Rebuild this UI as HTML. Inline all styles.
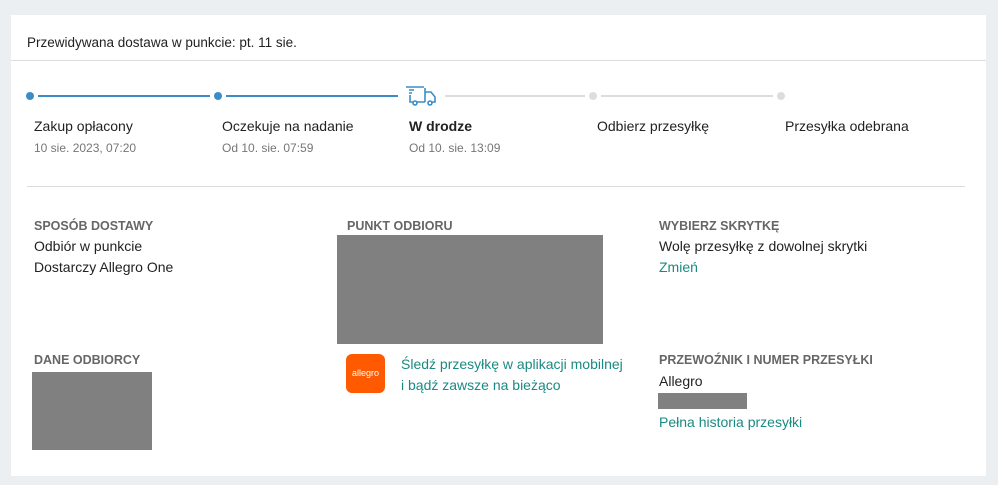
<!DOCTYPE html><html><head><style>
body{margin:0;width:998px;height:485px;background:#eceff2;font-family:"Liberation Sans",sans-serif;position:relative;overflow:hidden}
.card{position:absolute;left:11px;top:15px;width:975px;height:461px;background:#fff}
.a{position:absolute;white-space:nowrap}
.t{font-size:14px;color:#222}
.s{font-size:12px;color:#767676}
.h{font-size:12.5px;font-weight:bold;color:#666}
.g{font-size:14px;color:#1a8a82}
.gray{position:absolute;background:#808080}
.dot{position:absolute;width:8px;height:8px;border-radius:50%}
.ln{position:absolute;height:2px}
</style></head><body>
<div class="card"></div>
<div class="a t" style="left:27px;top:35px;font-size:13.5px">Przewidywana dostawa w punkcie: pt. 11 sie.</div>
<div style="position:absolute;left:11px;top:60px;width:975px;height:1px;background:#ddd"></div>
<div class="dot" style="left:26px;top:92px;background:#3c8dc5"></div>
<div class="ln" style="left:38px;top:95px;width:172px;background:#3c8dc5"></div>
<div class="dot" style="left:214px;top:92px;background:#3c8dc5"></div>
<div class="ln" style="left:226px;top:95px;width:172px;background:#3c8dc5"></div>
<svg style="position:absolute;left:405px;top:85px" width="32" height="22" viewBox="0 0 32 22" fill="none" stroke="#3c8dc5" stroke-width="1.6"><path d="M1 2h18M4 5h5M4 8h3M5 10v7h3M12 17h8M20 3v14M20 7h6l4 5v5h-3"/><circle cx="10" cy="18" r="2"/><circle cx="25" cy="18" r="2"/></svg>
<div class="ln" style="left:445px;top:95px;width:140px;background:#ddd"></div>
<div class="dot" style="left:589px;top:92px;background:#ddd"></div>
<div class="ln" style="left:601px;top:95px;width:172px;background:#ddd"></div>
<div class="dot" style="left:777px;top:92px;background:#ddd"></div>
<div class="a t" style="left:34px;top:118px">Zakup opłacony</div>
<div class="a s" style="left:34px;top:141px">10 sie. 2023, 07:20</div>
<div class="a t" style="left:222px;top:118px">Oczekuje na nadanie</div>
<div class="a s" style="left:222px;top:141px">Od 10. sie. 07:59</div>
<div class="a t" style="left:409px;top:118px;font-weight:bold">W drodze</div>
<div class="a s" style="left:409px;top:141px">Od 10. sie. 13:09</div>
<div class="a t" style="left:597px;top:118px">Odbierz przesyłkę</div>
<div class="a t" style="left:785px;top:118px">Przesyłka odebrana</div>
<div style="position:absolute;left:27px;top:186px;width:938px;height:1px;background:#ddd"></div>
<div class="a h" style="left:34px;top:219px">SPOSÓB DOSTAWY</div>
<div class="a t" style="left:34px;top:238px">Odbiór w punkcie</div>
<div class="a t" style="left:34px;top:259px">Dostarczy Allegro One</div>
<div class="a h" style="left:347px;top:219px">PUNKT ODBIORU</div>
<div class="gray" style="left:337px;top:235px;width:266px;height:109px"></div>
<div class="a h" style="left:659px;top:219px">WYBIERZ SKRYTKĘ</div>
<div class="a t" style="left:659px;top:238px">Wolę przesyłkę z dowolnej skrytki</div>
<div class="a g" style="left:659px;top:259px">Zmień</div>
<div class="a h" style="left:34px;top:353px">DANE ODBIORCY</div>
<div class="gray" style="left:32px;top:372px;width:120px;height:78px"></div>
<div style="position:absolute;left:346px;top:354px;width:39px;height:39px;border-radius:6px;background:#ff5a00;color:#fff;font-size:9px;line-height:39px;text-align:center">allegro</div>
<div class="a g" style="left:401px;top:356px">Śledź przesyłkę w aplikacji mobilnej</div>
<div class="a g" style="left:401px;top:377px">i bądź zawsze na bieżąco</div>
<div class="a h" style="left:659px;top:353px">PRZEWOŹNIK I NUMER PRZESYŁKI</div>
<div class="a t" style="left:659px;top:373px">Allegro</div>
<div class="gray" style="left:658px;top:393px;width:89px;height:16px"></div>
<div class="a g" style="left:659px;top:414px">Pełna historia przesyłki</div>
</body></html>
